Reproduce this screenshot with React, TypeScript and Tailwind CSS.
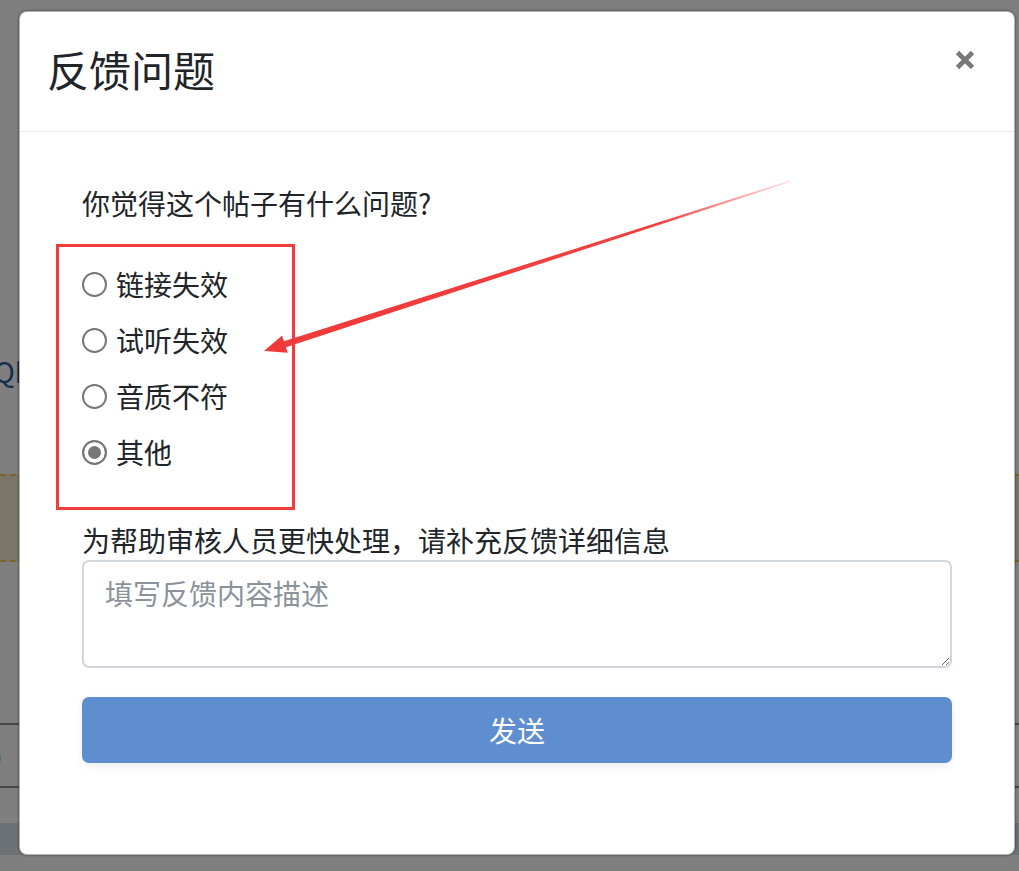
import React from 'react';

// Report dialog options
const reasons: string[] = ['链接失效', '试听失效', '音质不符', '其他'];

const App: React.FC = () => {
    return (
        <div className="relative h-[871px] w-[1019px] overflow-hidden bg-white font-['Noto_Sans_CJK_SC','Noto_Sans',sans-serif] text-[#212529]">
            {/* Page behind the backdrop */}
            <div className="flex flex-col pt-[350px]">
                <div className="ml-[-6px] text-[28px] leading-[42px] text-[#2b5c9c]">Qh</div>
                <div className="mt-[82px] h-[88px] border-y-2 border-dashed border-[#f2c84a] bg-[#f5ebcf]"></div>
                <div className="mt-[161px] flex h-[65px] items-center border-y-2 border-[#8e8e8e]">
                    <span className="ml-[-14px] text-[28px] text-[#2b5c9c]">0</span>
                </div>
                <div className="mt-[35px] h-[32px] bg-[#dbe5ed]"></div>
            </div>

            {/* Backdrop */}
            <div className="absolute inset-0 bg-black/50"></div>

            {/* Modal */}
            <div className="absolute inset-0 pl-[19px] pt-[11px]">
                <div className="flex h-[844px] w-[996px] flex-col rounded-[8px] border border-black/30 bg-white shadow-[0_0_2px_1px_rgba(0,0,0,0.25)]">
                    <div className="flex items-start justify-between border-b border-[#e5e9ec] px-[27px] pb-[31px] pt-[25px]">
                        <h5 className="text-[42px] font-normal leading-[63px]">反馈问题</h5>
                        <button className="mr-[2px] mt-[3px] p-[10px] text-[#787878]">
                            <svg width="20" height="20" viewBox="0 0 20 20">
                                <path d="M2.5 2.5 L17.5 17.5 M17.5 2.5 L2.5 17.5" stroke="currentColor" strokeWidth="4.6" strokeLinecap="butt" />
                            </svg>
                        </button>
                    </div>

                    <div className="flex flex-col px-[62px] pt-[50px]">
                        <p className="text-[28px] leading-[42px]">你觉得这个帖子有什么问题?</p>
                        <div className="mt-[39px] flex flex-col gap-[14px]">
                            {reasons.map((reason, index) => (
                                <label key={reason} className="flex h-[42px] items-center gap-[9px] text-[28px] leading-[42px]">
                                    <input
                                        type="radio"
                                        name="reason"
                                        defaultChecked={index === reasons.length - 1}
                                        className="h-[25px] w-[25px] appearance-none rounded-full border-2 border-[#767676] bg-white checked:bg-[#767676] checked:shadow-[inset_0_0_0_4px_white]"
                                    />
                                    <span>{reason}</span>
                                </label>
                            ))}
                        </div>

                        <p className="mt-[47px] text-[28px] leading-[40px]">为帮助审核人员更快处理，请补充反馈详细信息</p>
                        <textarea
                            placeholder="填写反馈内容描述"
                            className="h-[108px] w-full rounded-[7px] border-2 border-[#d2d7dd] px-[21px] py-[10px] text-[28px] leading-[42px] outline-none placeholder:text-[#8b9299]"
                        ></textarea>

                        <button className="mt-[29px] h-[66px] w-full rounded-[7px] bg-[#5e8ecf] text-[28px] leading-[42px] text-white shadow-[0_3px_8px_rgba(0,0,0,0.08)]">
                            发送
                        </button>
                    </div>
                </div>
            </div>

            {/* Annotation: red box and arrow */}
            <div className="pointer-events-none absolute left-[56px] top-[244px] h-[266px] w-[239px] border-[3px] border-[#f23c3c]"></div>
            <svg className="pointer-events-none absolute inset-0" width="1019" height="871">
                <defs>
                    <linearGradient id="arrowFade" x1="264" y1="351" x2="790" y2="181" gradientUnits="userSpaceOnUse">
                        <stop offset="0" stopColor="#f03a3a" />
                        <stop offset="0.75" stopColor="#f24040" />
                        <stop offset="1" stopColor="#f24040" stopOpacity="0.15" />
                    </linearGradient>
                </defs>
                <polygon
                    points="790,180.6 283.9,341.2 282.1,335.6 264,351 287.7,352.8 285.9,347.2 790,182"
                    fill="url(#arrowFade)"
                />
            </svg>
        </div>
    );
};

export default App;
